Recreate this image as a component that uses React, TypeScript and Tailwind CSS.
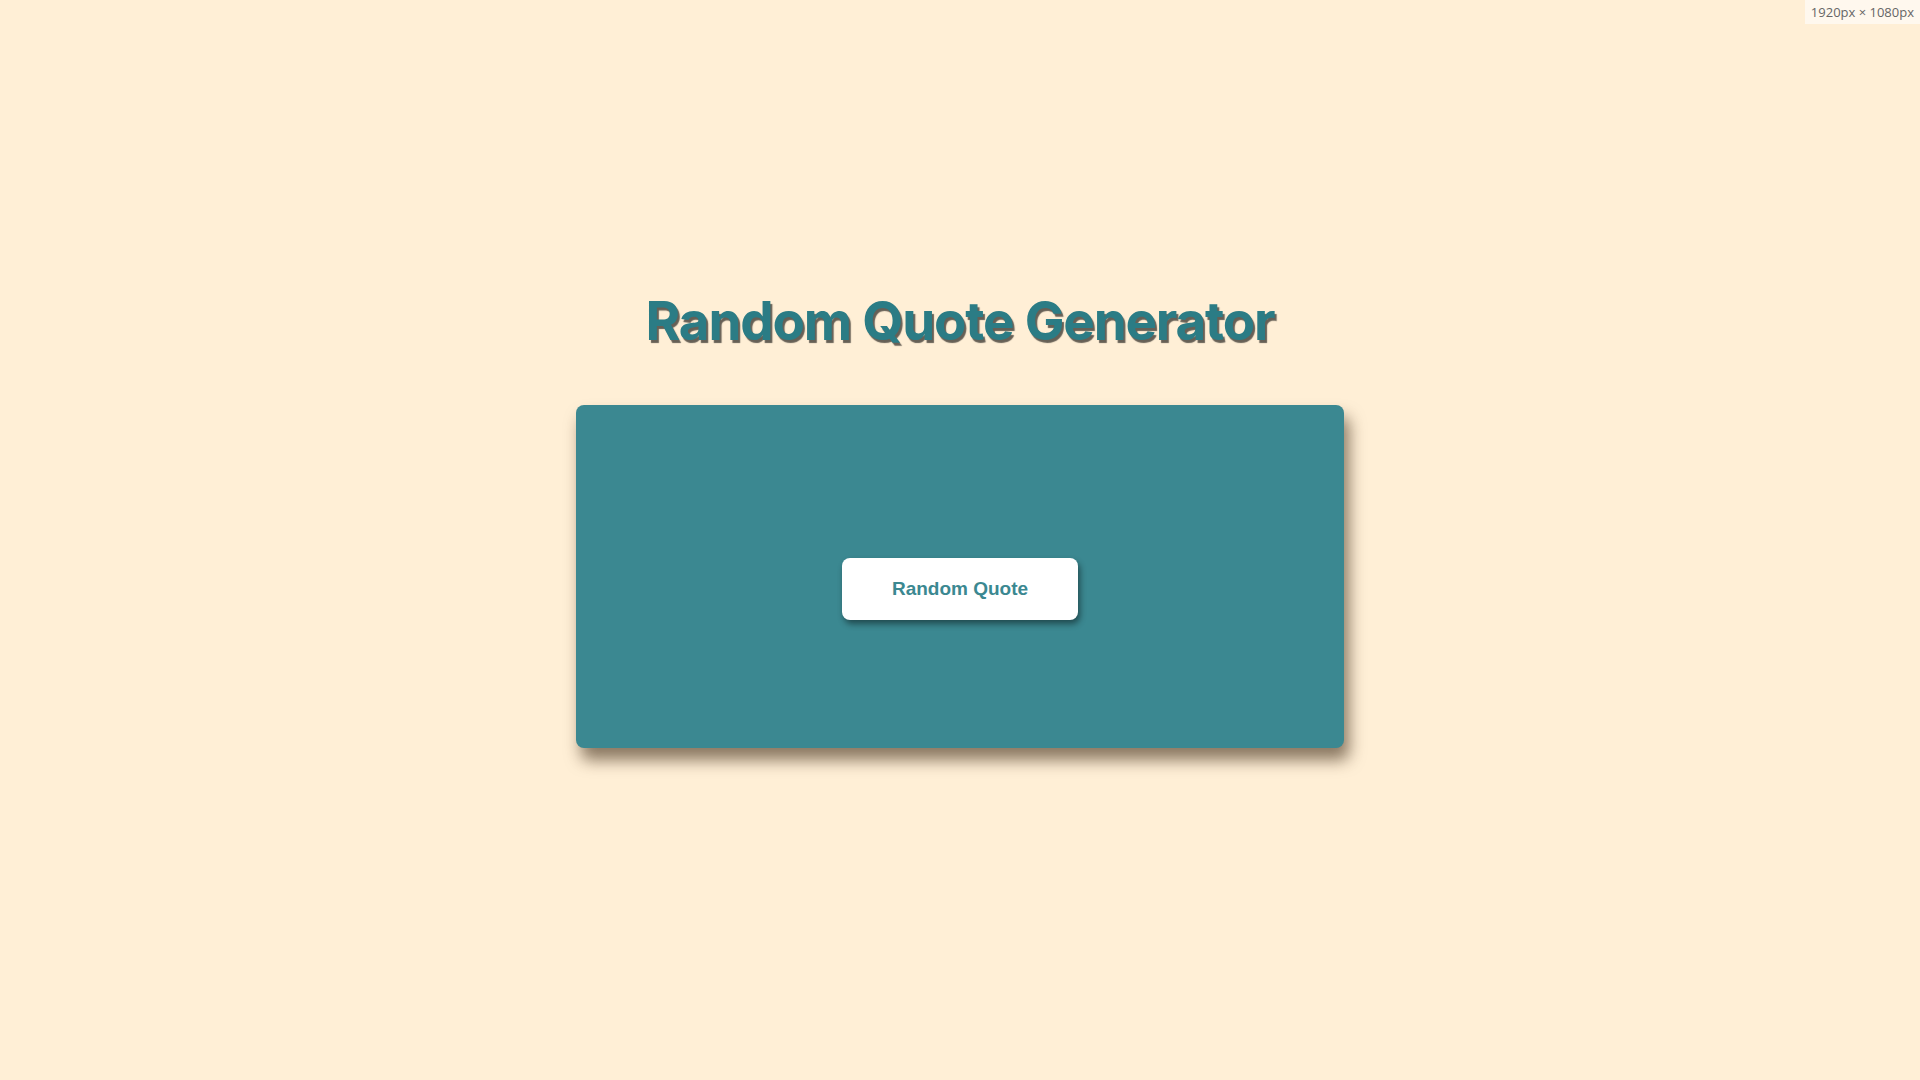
export default function App() {
    return (
        <div className="relative flex min-h-screen w-full flex-col items-center bg-[#ffefd6] font-['Liberation_Sans',sans-serif]">
            {/* size badge, top right */}
            <div className="absolute right-0 top-0 bg-[#fff8ee] px-[6px] py-[3px] text-[13px] leading-[18px] text-[#666] font-['Open_Sans',sans-serif]">
                1920px × 1080px
            </div>

            <h1 className="mt-[289px] font-['Inter',sans-serif] text-[53px] font-bold leading-[64px] tracking-[-1.2px] text-[#2b7c85] [text-shadow:2px_3px_1px_rgba(0,0,0,0.6)]">
                Random Quote Generator
            </h1>

            <div className="mt-[52px] flex h-[343px] w-[768px] items-center justify-center rounded-[8px] bg-[#3b8891] pt-[25px] shadow-[5px_12px_16px_rgba(60,40,20,0.6)]">
                <button className="h-[62px] w-[236px] rounded-[8px] bg-white text-[19px] font-bold text-[#3b8891] shadow-[2px_4px_6px_rgba(0,0,0,0.45)]">
                    Random Quote
                </button>
            </div>
        </div>
    );
}
